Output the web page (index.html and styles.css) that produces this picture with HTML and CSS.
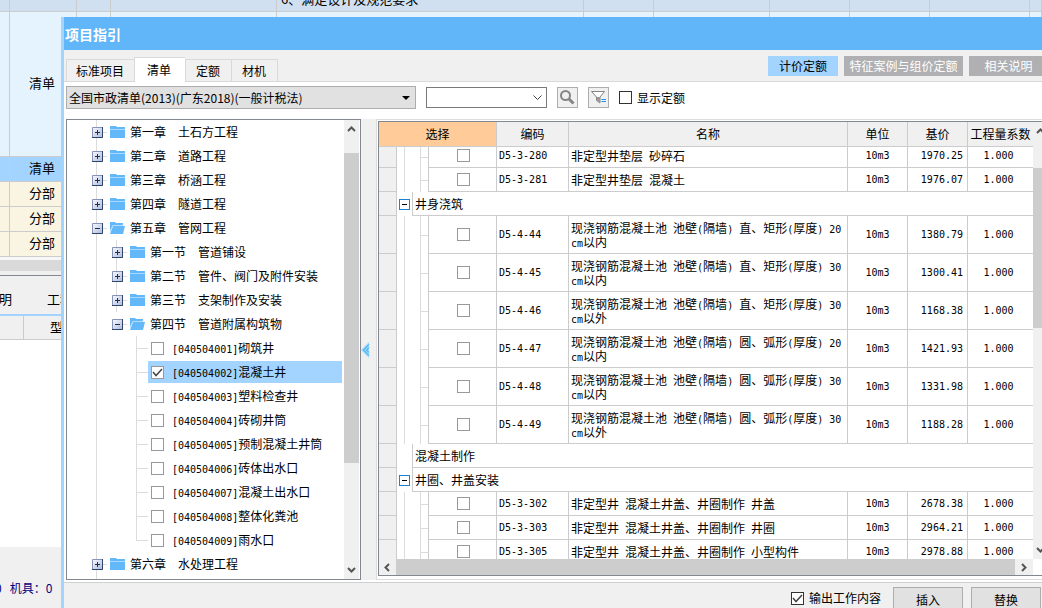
FILE: index.html
```html
<!DOCTYPE html>
<html lang="zh-CN">
<head>
<meta charset="utf-8">
<title>项目指引</title>
<link rel="stylesheet" href="styles.css">
</head>
<body>
<svg class="defs" aria-hidden="true">
  <defs>
    <linearGradient id="face" x1="0" y1="0" x2="1" y2="1"><stop offset="0" stop-color="#fff"/><stop offset="1" stop-color="#a9b6dc"/></linearGradient>
    <symbol id="plus" viewBox="0 0 11 11"><path fill="url(#face)" d="M0 0h11v11H0z"/><path fill="none" stroke="#8594b4" d="M.5 11V.5H11"/><path fill="none" stroke="#2e4568" d="M10.500 0v10.500H0"/><path stroke="#1c3050" d="M3 5.500h5M5.500 3v5"/></symbol>
    <symbol id="minus" viewBox="0 0 11 11"><path fill="url(#face)" d="M0 0h11v11H0z"/><path fill="none" stroke="#8594b4" d="M.5 11V.5H11"/><path fill="none" stroke="#2e4568" d="M10.500 0v10.500H0"/><path stroke="#1c3050" d="M3 5.500h5"/></symbol>
    <symbol id="folder" viewBox="0 0 16 12"><path fill="#63b8fa" d="M0 0h6l1 1h8v2H0zM0 4h15v8H0z"/><path fill="#a8d8ff" d="M0 3h15v1H0z"/></symbol>
    <symbol id="folder-open" viewBox="0 0 16 12"><path fill="#63b8fa" d="M0 0h5l1 1h7v2H3L0 9z"/><path fill="#63b8fa" d="M3 4h12l-2 8H0z"/><path fill="none" stroke="#b4deff" d="M0 10l3-6.500h10V2"/></symbol>
    <symbol id="up" viewBox="0 0 9 6"><path fill="none" stroke="#555" stroke-width="2" d="M1 5l3.500-3.500L8 5"/></symbol>
    <symbol id="down" viewBox="0 0 9 6"><path fill="none" stroke="#555" stroke-width="2" d="M1 1l3.500 3.500L8 1"/></symbol>
    <symbol id="left" viewBox="0 0 6 9"><path fill="none" stroke="#555" stroke-width="2" d="M5 1L1.500 4.500 5 8"/></symbol>
    <symbol id="right" viewBox="0 0 6 9"><path fill="none" stroke="#555" stroke-width="2" d="M1 1l3.500 3.500L1 8"/></symbol>
  </defs>
</svg>

<main class="backdrop">
  <table class="sheet">
    <colgroup><col class="w10"><col class="w67"><col class="w34"><col class="w166"><col class="w307"><col class="w70"><col class="w116"><col class="w80"><col class="w80"><col class="w100"><col></colgroup>
    <tr class="cut"><td></td><td></td><td></td><td></td><td><div class="spill"><p>6、满足设计及规范要求</p></div></td><td></td><td></td><td></td><td></td><td></td><td></td></tr>
    <tr class="tall"><td></td><td>清单</td><td></td><td></td><td></td><td></td><td></td><td></td><td></td><td></td><td></td></tr>
    <tr class="current"><td></td><td>清单</td><td colspan="9"></td></tr>
    <tr class="part"><td></td><td>分部</td><td colspan="9"></td></tr>
    <tr class="part"><td></td><td>分部</td><td colspan="9"></td></tr>
    <tr class="part"><td></td><td>分部</td><td colspan="9"></td></tr>
  </table>
  <div class="sheet-scroll"></div>
  <div class="sheet-tabs"><span>说明</span><span>工程</span></div>
  <div class="sheet-head"><span></span><span>型号</span></div>
  <div class="sheet-empty"></div>
  <div class="sheet-status"><span>0</span><span>机具：0</span></div>
</main>

<section class="dialog" aria-label="项目指引">
  <h1 class="title">项目指引</h1>

  <div class="strip">
    <div class="tabs" role="tablist">
      <button class="tab" role="tab">标准项目</button>
      <button class="tab on" role="tab" aria-selected="true">清单</button>
      <button class="tab" role="tab">定额</button>
      <button class="tab" role="tab">材机</button>
    </div>
    <div class="modes">
      <button class="mode on">计价定额</button>
      <button class="mode wide">特征案例与组价定额</button>
      <button class="mode">相关说明</button>
    </div>
  </div>

  <div class="toolbar">
    <select class="library" aria-label="清单库"><option>全国市政清单(2013)(广东2018)(一般计税法)</option></select>
    <div class="combo">
      <input type="text" aria-label="查询">
      <button aria-label="展开"><svg width="9" height="6" viewBox="0 0 9 6"><path fill="none" stroke="#444" d="M.5.5l4 4 4-4"/></svg></button>
    </div>
    <button class="tool" aria-label="搜索"><svg width="15" height="15" viewBox="0 0 15 15"><circle cx="5.500" cy="5.500" r="4.500" fill="none" stroke="#858585" stroke-width="2"/><path stroke="#858585" stroke-width="3" d="M9 9l4.500 4.500"/></svg></button>
    <button class="tool" aria-label="筛选"><svg width="15" height="15" viewBox="0 0 15 15"><path fill="#fff" stroke="#858585" d="M.5 1.500h13L9 7v6L5.500 10.500V7z"/><path fill="#999" d="M6 7h3v6L6 10.500z"/><path stroke="#1e90ff" d="M10.500 9.500H15M10.500 11.500H15"/></svg></button>
    <label class="check"><input type="checkbox">显示定额</label>
  </div>

  <div class="work">
    <nav class="tree-box" aria-label="清单章节">
      <ul class="tree">
        <li><div class="node"><svg class="exp"><use href="#plus"/></svg><i></i><svg class="fold"><use href="#folder"/></svg>第一章　土石方工程</div></li>
        <li><div class="node"><svg class="exp"><use href="#plus"/></svg><i></i><svg class="fold"><use href="#folder"/></svg>第二章　道路工程</div></li>
        <li><div class="node"><svg class="exp"><use href="#plus"/></svg><i></i><svg class="fold"><use href="#folder"/></svg>第三章　桥涵工程</div></li>
        <li><div class="node"><svg class="exp"><use href="#plus"/></svg><i></i><svg class="fold"><use href="#folder"/></svg>第四章　隧道工程</div></li>
        <li><div class="node"><svg class="exp"><use href="#minus"/></svg><i></i><svg class="fold"><use href="#folder-open"/></svg>第五章　管网工程</div>
          <ul class="sections">
            <li><div class="node"><svg class="exp"><use href="#plus"/></svg><i></i><svg class="fold"><use href="#folder"/></svg>第一节　管道铺设</div></li>
            <li><div class="node"><svg class="exp"><use href="#plus"/></svg><i></i><svg class="fold"><use href="#folder"/></svg>第二节　管件、阀门及附件安装</div></li>
            <li><div class="node"><svg class="exp"><use href="#plus"/></svg><i></i><svg class="fold"><use href="#folder"/></svg>第三节　支架制作及安装</div></li>
            <li><div class="node"><svg class="exp"><use href="#minus"/></svg><i></i><svg class="fold"><use href="#folder-open"/></svg>第四节　管道附属构筑物</div>
              <ul class="items">
                <li class="leaf"><i></i><label><input type="checkbox"><span><span class="n">[040504001]</span>砌筑井</span></label></li>
                <li class="leaf"><i></i><label class="picked"><input type="checkbox" checked><span><span class="n">[040504002]</span>混凝土井</span></label></li>
                <li class="leaf"><i></i><label><input type="checkbox"><span><span class="n">[040504003]</span>塑料检查井</span></label></li>
                <li class="leaf"><i></i><label><input type="checkbox"><span><span class="n">[040504004]</span>砖砌井筒</span></label></li>
                <li class="leaf"><i></i><label><input type="checkbox"><span><span class="n">[040504005]</span>预制混凝土井筒</span></label></li>
                <li class="leaf"><i></i><label><input type="checkbox"><span><span class="n">[040504006]</span>砖体出水口</span></label></li>
                <li class="leaf"><i></i><label><input type="checkbox"><span><span class="n">[040504007]</span>混凝土出水口</span></label></li>
                <li class="leaf"><i></i><label><input type="checkbox"><span><span class="n">[040504008]</span>整体化粪池</span></label></li>
                <li class="leaf"><i></i><label><input type="checkbox"><span><span class="n">[040504009]</span>雨水口</span></label></li>
              </ul>
            </li>
          </ul>
        </li>
        <li><div class="node"><svg class="exp"><use href="#plus"/></svg><i></i><svg class="fold"><use href="#folder"/></svg>第六章　水处理工程</div></li>
      </ul>
      <div class="vbar"><svg class="av"><use href="#up"/></svg><div class="track"><div class="thumb tree-thumb"></div></div><svg class="av"><use href="#down"/></svg></div>
    </nav>

    <button class="splitter" aria-label="收起"><svg width="9" height="16" viewBox="0 0 9 16"><path fill="#9bd8fb" d="M8 0v16L0 8z"/><path fill="none" stroke="#2a9fe6" stroke-width="1" d="M8 2.500L2.500 8 8 13.500M8 5.500L5.500 8 8 10.500"/></svg></button>

    <div class="frame">
      <div class="grid-box">
        <div class="grid-view">
          <table class="quota">
            <colgroup><col class="w18"><col class="w16"><col class="w16"><col class="w68"><col class="w72"><col><col class="w60"><col class="w60"><col class="w65"></colgroup>
            <thead><tr><th colspan="4" class="sorted">选择</th><th>编码</th><th>名称</th><th>单位</th><th>基价</th><th class="last">工程量系数</th></tr></thead>
            <tbody>
              <tr class="first"><td class="g"></td><td class="a"></td><td class="b"></td><td class="c"><input type="checkbox" aria-label="D5-3-280"></td><td class="m">D5-3-280</td><td class="t">非定型井垫层<span class="n"> </span>砂碎石</td><td class="u">10m3</td><td class="p">1970.25</td><td class="f">1.000</td></tr>
              <tr><td class="g"></td><td class="a"></td><td class="b"></td><td class="c"><input type="checkbox" aria-label="D5-3-281"></td><td class="m">D5-3-281</td><td class="t">非定型井垫层<span class="n"> </span>混凝土</td><td class="u">10m3</td><td class="p">1976.07</td><td class="f">1.000</td></tr>
              <tr><td class="g"></td><td class="e"><button aria-label="折叠"></button></td><td class="group" colspan="7">井身浇筑</td></tr>
              <tr class="two"><td class="g"></td><td class="a"></td><td class="b"></td><td class="c"><input type="checkbox" aria-label="D5-4-44"></td><td class="m">D5-4-44</td><td class="t">现浇钢筋混凝土池<span class="n"> </span>池壁<span class="n">(</span>隔墙<span class="n">) </span>直、矩形<span class="n">(</span>厚度<span class="n">) 20</span><br><span class="n">cm</span>以内</td><td class="u">10m3</td><td class="p">1380.79</td><td class="f">1.000</td></tr>
              <tr class="two"><td class="g"></td><td class="a"></td><td class="b"></td><td class="c"><input type="checkbox" aria-label="D5-4-45"></td><td class="m">D5-4-45</td><td class="t">现浇钢筋混凝土池<span class="n"> </span>池壁<span class="n">(</span>隔墙<span class="n">) </span>直、矩形<span class="n">(</span>厚度<span class="n">) 30</span><br><span class="n">cm</span>以内</td><td class="u">10m3</td><td class="p">1300.41</td><td class="f">1.000</td></tr>
              <tr class="two"><td class="g"></td><td class="a"></td><td class="b"></td><td class="c"><input type="checkbox" aria-label="D5-4-46"></td><td class="m">D5-4-46</td><td class="t">现浇钢筋混凝土池<span class="n"> </span>池壁<span class="n">(</span>隔墙<span class="n">) </span>直、矩形<span class="n">(</span>厚度<span class="n">) 30</span><br><span class="n">cm</span>以外</td><td class="u">10m3</td><td class="p">1168.38</td><td class="f">1.000</td></tr>
              <tr class="two"><td class="g"></td><td class="a"></td><td class="b"></td><td class="c"><input type="checkbox" aria-label="D5-4-47"></td><td class="m">D5-4-47</td><td class="t">现浇钢筋混凝土池<span class="n"> </span>池壁<span class="n">(</span>隔墙<span class="n">) </span>圆、弧形<span class="n">(</span>厚度<span class="n">) 20</span><br><span class="n">cm</span>以内</td><td class="u">10m3</td><td class="p">1421.93</td><td class="f">1.000</td></tr>
              <tr class="two"><td class="g"></td><td class="a"></td><td class="b"></td><td class="c"><input type="checkbox" aria-label="D5-4-48"></td><td class="m">D5-4-48</td><td class="t">现浇钢筋混凝土池<span class="n"> </span>池壁<span class="n">(</span>隔墙<span class="n">) </span>圆、弧形<span class="n">(</span>厚度<span class="n">) 30</span><br><span class="n">cm</span>以内</td><td class="u">10m3</td><td class="p">1331.98</td><td class="f">1.000</td></tr>
              <tr class="two"><td class="g"></td><td class="a"></td><td class="b"></td><td class="c"><input type="checkbox" aria-label="D5-4-49"></td><td class="m">D5-4-49</td><td class="t">现浇钢筋混凝土池<span class="n"> </span>池壁<span class="n">(</span>隔墙<span class="n">) </span>圆、弧形<span class="n">(</span>厚度<span class="n">) 30</span><br><span class="n">cm</span>以外</td><td class="u">10m3</td><td class="p">1188.28</td><td class="f">1.000</td></tr>
              <tr><td class="g"></td><td class="e"></td><td class="group" colspan="7">混凝土制作</td></tr>
              <tr><td class="g"></td><td class="e"><button aria-label="折叠"></button></td><td class="group" colspan="7">井圈、井盖安装</td></tr>
              <tr><td class="g"></td><td class="a"></td><td class="b"></td><td class="c"><input type="checkbox" aria-label="D5-3-302"></td><td class="m">D5-3-302</td><td class="t">非定型井<span class="n"> </span>混凝土井盖、井圈制作<span class="n"> </span>井盖</td><td class="u">10m3</td><td class="p">2678.38</td><td class="f">1.000</td></tr>
              <tr><td class="g"></td><td class="a"></td><td class="b"></td><td class="c"><input type="checkbox" aria-label="D5-3-303"></td><td class="m">D5-3-303</td><td class="t">非定型井<span class="n"> </span>混凝土井盖、井圈制作<span class="n"> </span>井圈</td><td class="u">10m3</td><td class="p">2964.21</td><td class="f">1.000</td></tr>
              <tr><td class="g"></td><td class="a"></td><td class="b"></td><td class="c"><input type="checkbox" aria-label="D5-3-305"></td><td class="m">D5-3-305</td><td class="t">非定型井<span class="n"> </span>混凝土井盖、井圈制作<span class="n"> </span>小型构件</td><td class="u">10m3</td><td class="p">2978.88</td><td class="f">1.000</td></tr>
            </tbody>
          </table>
        </div>
        <div class="vbar grid-vbar"><svg class="av"><use href="#up"/></svg><div class="track"><div class="thumb grid-thumb"></div></div><svg class="av"><use href="#down"/></svg></div>
        <div class="hbar"><svg class="ah"><use href="#left"/></svg><div class="thumb"></div><svg class="ah"><use href="#right"/></svg></div>
      </div>
    </div>
  </div>

  <footer class="foot">
    <label class="check"><input type="checkbox" checked>输出工作内容</label>
    <button>插入</button>
    <button>替换</button>
  </footer>
</section>
</body>
</html>
```

FILE: styles.css
```css
* { box-sizing: border-box; }
html, body { height: 100%; }
body {
  margin: 0;
  overflow: hidden;
  position: relative;
  background: #fff;
  color: #000;
  font: 12px/16px "Noto Sans CJK SC", sans-serif;
}
button, input, select { font: inherit; color: inherit; margin: 0; }
button { padding: 0; border: 0; background: none; white-space: nowrap; }
svg { display: block; flex: none; }
.defs { position: absolute; width: 0; height: 0; }
table { border-collapse: separate; border-spacing: 0; table-layout: fixed; width: 100%; }
td, th { padding: 0; font-weight: normal; }
.n { font: 10px/1px "DejaVu Sans Mono", monospace; white-space: pre; }

input[type="checkbox"] {
  appearance: none;
  flex: none;
  display: block;
  width: 13px;
  height: 13px;
  border: 1px solid #999;
  background: #fff center / 11px 11px no-repeat;
}
input[type="checkbox"]:checked {
  background-image: url("data:image/svg+xml,%3Csvg xmlns='http://www.w3.org/2000/svg' viewBox='0 0 11 11'%3E%3Cpath fill='none' stroke='%23444' stroke-width='1.500' d='M1 5l3 3.500L10 2'/%3E%3C/svg%3E");
}

/* column widths */
.w10 { width: 10px; } .w16 { width: 16px; } .w18 { width: 18px; } .w34 { width: 34px; }
.w60 { width: 60px; } .w65 { width: 65px; } .w67 { width: 67px; } .w68 { width: 68px; }
.w70 { width: 70px; } .w72 { width: 72px; } .w80 { width: 80px; } .w100 { width: 100px; }
.w116 { width: 116px; } .w166 { width: 166px; } .w307 { width: 307px; }

/* window behind the dialog */
.backdrop { display: flex; flex-direction: column; height: 100%; overflow: hidden; }
.sheet { font-size: 13px; text-align: center; }
.sheet td { height: 25px; padding: 0 2px 2px 0; border: solid #ccc; border-width: 0 1px 1px 0; }
.sheet .cut td { height: 12px; padding: 0; background: #d1e0f1; }
.spill { height: 11px; overflow: hidden; text-align: left; }
.spill p { margin: -9px 0 0 4px; }
.sheet .tall td { height: 145px; background: #e5f3ff; }
.sheet .current td { background: #a2d4ff; }
.sheet .part td { background: #faf4e3; }
.sheet-scroll { height: 18px; flex: none; border: solid #f7f7f7; border-width: 3px 0 4px; border-bottom-color: #f0f0f0; background: #d9d9d9; }
.sheet-tabs, .sheet-head { display: flex; flex: none; background: #f0f0f0; font-size: 13px; overflow: hidden; }
.sheet-tabs { height: 41px; border-top: 1px solid #828790; border-bottom: 2px solid #a2d4ff; align-items: center; padding-top: 8px; }
.sheet-tabs span { width: 61px; flex: none; }
.sheet-tabs span:first-child { margin-left: -14px; }
.sheet-head { height: 24px; border-bottom: 1px solid #ccc; line-height: 22px; }
.sheet-head span:first-child { width: 24px; border-right: 1px solid #ccc; }
.sheet-head span:last-child { padding-left: 26px; }
.sheet-empty { flex: 1; }
.sheet-status { display: flex; gap: 8px; flex: none; height: 61px; padding-top: 33px; background: #f0f0f0; color: #000080; overflow: hidden; }
.sheet-status span:first-child { margin-left: -5px; }

/* dialog */
.dialog {
  position: absolute;
  inset: 17px 0 0 61px;
  display: flex;
  flex-direction: column;
  overflow: hidden;
  background: #fff;
  border-left: 3px solid #a2d4ff;
}
.title { flex: none; height: 33px; margin: 0 0 0 -3px; padding: 0 4px; background: #60b6f8; color: #fff; font-size: 14px; font-weight: bold; line-height: 35px; }
.strip { display: flex; flex: none; justify-content: space-between; align-items: flex-end; height: 32px; padding-left: 2px; background: #f0f0f0; box-shadow: inset 0 -1px #d9d9d9; overflow: hidden; }
.tabs { display: flex; align-items: flex-end; }
.tab { height: 23px; padding: 0 11px 0 10px; border: 1px solid #d9d9d9; border-right: 0; background: #f0f0f0; }
.tab:first-child { padding: 0 10px 0 9px; }
.tab:last-child { border-right: 1px solid #d9d9d9; }
.tab.on { height: 25px; padding: 0 14px 0 12px; background: #fff; border-bottom: 0; }
.modes { display: flex; gap: 6px; align-self: flex-start; padding-top: 6px; margin-right: -6px; }
.mode { width: 79px; height: 20px; background: #b0b0b2; color: #fff; }
.mode.on { width: 70px; background: #a2d4ff; color: #000; }
.mode.wide { width: 119px; }

.toolbar { display: flex; flex: none; align-items: center; gap: 10px; height: 37px; padding: 0 2px 6px; }
.library {
  appearance: none;
  width: 350px;
  height: 23px;
  padding: 0 2px;
  border: 1px solid #adadad;
  border-radius: 0;
  background: #e1e1e1 url("data:image/svg+xml,%3Csvg xmlns='http://www.w3.org/2000/svg' viewBox='0 0 8 4'%3E%3Cpath d='M0 0h8L4 4z'/%3E%3C/svg%3E") right 5px center / 8px 4px no-repeat;
}
.combo { display: flex; width: 121px; height: 21px; border: 1px solid #7a7a7a; background: #fff; }
.combo input { flex: 1; min-width: 0; border: 0; padding: 0 3px; background: none; }
.combo button { display: grid; place-items: center; width: 17px; }
.tool { display: grid; place-items: center; width: 21px; height: 21px; border: 1px solid #adadad; background: #f0f0f0; }
.check { display: flex; align-items: center; gap: 5px; }
.check input[type="checkbox"] { border-color: #333; }

.work { display: flex; flex: 1; min-height: 0; padding: 0 0 2px 2px; }

/* chapter tree */
.tree-box { display: flex; width: 295px; flex: none; border: 1px solid #828790; overflow: hidden; }
.tree, .tree ul { list-style: none; margin: 0; padding: 0; background: linear-gradient(#dcdcdc, #dcdcdc) 29px 0 / 1px 100% no-repeat; }
.tree { flex: 1; min-width: 0; }
.tree ul { margin-left: 20px; }
.tree .sections { background-size: 1px 72px; }
.tree .items { background-size: 1px calc(100% - 12px); }
.tree i { border-top: 1px solid #dcdcdc; }
.node { display: flex; align-items: center; height: 24px; padding-left: 25px; white-space: nowrap; }
.node i { width: 4px; margin-right: 3px; }
.exp { width: 11px; height: 11px; }
.fold { width: 16px; height: 12px; margin-right: 4px; }
.leaf { display: flex; align-items: center; height: 24px; padding-left: 29px; white-space: nowrap; }
.leaf i { width: 12px; }
.leaf label { display: flex; flex: 1; align-items: center; gap: 8px; height: 22px; padding-left: 3px; margin-right: 2px; }
.picked { background: #a2d4ff; }

/* scroll bars */
.vbar { display: flex; flex-direction: column; width: 16px; flex: none; padding-right: 1px; background: #f0f0f0; background-clip: content-box; }
.av { width: 9px; height: 6px; margin: 6px 3px; }
.track { flex: 1; min-height: 0; padding-top: 15px; }
.thumb { background: #cdcdcd; }
.tree-thumb { height: 76%; }
.hbar { display: flex; align-items: center; background: #f0f0f0; }
.hbar .thumb { flex: 1; align-self: stretch; }
.ah { width: 6px; height: 9px; margin: 0 6px 0 5px; }
.hbar .ah:last-child { margin: 0 6px; }

.splitter { display: flex; align-items: center; width: 15px; flex: none; background: #f0f0f0; }

/* quota grid */
.frame { display: flex; flex: 1; min-width: 0; padding: 1px 0 3px 1px; border: solid #dcdcdc; border-width: 1px 0 1px 1px; }
.grid-box { flex: 1; min-width: 0; display: grid; grid-template: minmax(0, 1fr) 16px / minmax(0, 1fr) 9px; border: solid #828790; border-width: 1px 0 1px 1px; }
.grid-view { overflow: hidden; }
.grid-vbar { width: 9px; overflow: hidden; padding: 0; }
.grid-vbar .track { padding-top: 28px; }
.grid-thumb { height: 43%; }
.quota th { height: 25px; background: #f0f0f0; border: solid #ccc; border-width: 0 1px 1px 0; white-space: nowrap; }
.quota .sorted { background: #ffcc99; }
.quota td { height: 24px; border: solid #ccc; border-width: 0 1px 1px 0; line-height: 14px; white-space: nowrap; }
.quota .first td { height: 21px; padding-bottom: 3px; }
.quota .two td { height: 38px; }
.quota .g { background: #f0f0f0; }
.quota .a { border: 0; background: linear-gradient(#dcdcdc, #dcdcdc) 7px 0 / 1px 100% no-repeat; }
.quota .b {
  border-bottom: 0;
  background: linear-gradient(#dcdcdc, #dcdcdc) 7px 0 / 1px 100% no-repeat, linear-gradient(#dcdcdc, #dcdcdc) 7px center / 8px 1px no-repeat;
}
.quota .c { padding-left: 1px; }
.quota .c input { margin: 0 auto; }
.quota .m, .quota .u, .quota .p, .quota .f { font: 10px/14px "DejaVu Sans Mono", monospace; }
.quota .m, .quota .t, .quota .group { padding-left: 2px; }
.quota .u, .quota .f { text-align: center; }
.quota .f { padding-right: 4px; }
.quota .p { text-align: right; padding-right: 4px; }
.quota .e { border-bottom: 0; }
.quota .e button { display: block; width: 11px; height: 11px; margin-left: 2px; border: 1px solid #1883d7; background: linear-gradient(#000, #000) center / 5px 1px no-repeat #fff; }
.quota .last, .quota .f, .quota .group { border-right: 0; }

/* bottom bar */
.foot { display: flex; flex: none; justify-content: flex-end; gap: 8px; height: 26px; padding: 4px 1px 0 0; border-top: 1px solid #d0d0d0; background: #f0f0f0; overflow: hidden; }
.foot .check { height: 22px; margin-right: 4px; }
.foot button { width: 70px; height: 26px; border: 1px solid #adadad; background: #e1e1e1; }
```
